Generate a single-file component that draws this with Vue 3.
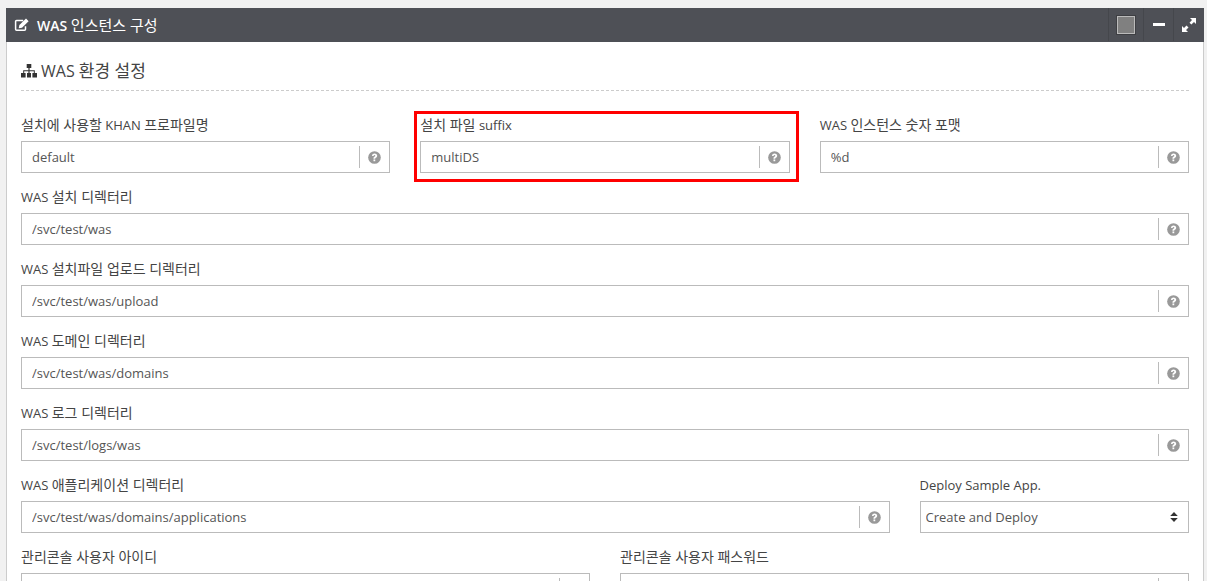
<script setup>
const split = (text) =>
  text.split(/([가-힣]+(?: [가-힣]+)*)/).filter(Boolean).map((t) => ({ t, ko: /[가-힣]/.test(t) }))

const rows = [
  [
    { label: '설치에 사용할 KHAN 프로파일명', value: 'default', span: 4 },
    { label: '설치 파일 suffix', value: 'multiDS', span: 4, mark: true },
    { label: 'WAS 인스턴스 숫자 포맷', value: '%d', span: 4 },
  ],
  [{ label: 'WAS 설치 디렉터리', value: '/svc/test/was', span: 12 }],
  [{ label: 'WAS 설치파일 업로드 디렉터리', value: '/svc/test/was/upload', span: 12 }],
  [{ label: 'WAS 도메인 디렉터리', value: '/svc/test/was/domains', span: 12 }],
  [{ label: 'WAS 로그 디렉터리', value: '/svc/test/logs/was', span: 12 }],
  [
    { label: 'WAS 애플리케이션 디렉터리', value: '/svc/test/was/domains/applications', span: 9 },
    { label: 'Deploy Sample App.', value: 'Create and Deploy', span: 3, select: true },
  ],
  [
    { label: '관리콘솔 사용자 아이디', value: '', span: 6 },
    { label: '관리콘솔 사용자 패스워드', value: '', span: 6 },
  ],
]
const fields = rows.flat()
const title = split('WAS 인스턴스 구성')
const section = split('WAS 환경 설정')
</script>

<template>
  <div class="page">
    <section class="panel">
      <header class="head">
        <svg class="edit" viewBox="0 0 16 14" width="16" height="14">
          <path d="M11.5 8.2v3a1 1 0 0 1-1 1H2.6a1 1 0 0 1-1-1V3.4a1 1 0 0 1 1-1h6.6" fill="none" stroke="#fff" stroke-width="1.5"/>
          <path d="M5.4 7 12 .6l2.6 2.6L8 9.7l-3.3.6z" fill="#fff"/>
        </svg>
        <h2 class="title"><span v-for="(r, i) in title" :key="i" :class="{ ko: r.ko }">{{ r.t }}</span></h2>
        <div class="tools">
          <div class="tool color"><span class="swatch"></span></div>
          <div class="tool min"><span class="dash"></span></div>
          <div class="tool full">
            <svg viewBox="0 0 14 14" width="14" height="14">
              <path d="M8 0h6v6l-2-2-2.6 2.6-1.9-1.9L10 2.1zM0 8l2 2 2.5-2.6 2 2L4 12l2 2H0z" fill="#fff"/>
            </svg>
          </div>
        </div>
      </header>
      <div class="body">
        <h3 class="section">
          <svg viewBox="0 0 16 14" width="16" height="14">
            <path d="M5.7 0h4.6v4H8.6v2.2h5.2V9H16v4.4h-4.6V9h1.4V7.2H8.6V9H10v4.4H6V9h1.4V7.2H3.2V9h1.4v4.4H0V9h2.2V6.2h5.2V4H5.7z" fill="#333"/>
          </svg>
          <span><span v-for="(r, i) in section" :key="i" :class="{ ko: r.ko }">{{ r.t }}</span></span>
        </h3>
        <form class="grid">
          <div v-for="f in fields" :key="f.label" class="field" :class="['s' + f.span, { mark: f.mark }]">
            <label class="lab"><span v-for="(r, i) in split(f.label)" :key="i" :class="{ ko: r.ko }">{{ r.t }}</span></label>
            <div class="control">
              <input class="inp" :value="f.value" readonly />
              <template v-if="f.select">
                <svg class="sort" viewBox="0 0 8 10" width="8" height="10">
                  <path d="M4 0l3.8 4H.2zM4 10L.2 6h7.6z" fill="#333"/>
                </svg>
              </template>
              <template v-else>
                <span class="sep"></span>
                <svg class="help" viewBox="0 0 14 14" width="13" height="13">
                  <circle cx="7" cy="7" r="6.8" fill="#999"/>
                  <path d="M4.3 5.3C4.5 3.6 5.7 2.8 7.1 2.8c1.6 0 2.8 1 2.8 2.4 0 1.1-.7 1.7-1.4 2.1-.6.3-.7.6-.7 1.1H5.9c0-1.2.2-1.7 1-2.2.6-.4 1-.6 1-1.1s-.4-.8-.9-.8-.9.3-1 1z" fill="#fff"/>
                  <rect x="5.9" y="9.1" width="1.9" height="1.9" fill="#fff"/>
                </svg>
              </template>
            </div>
          </div>
        </form>
      </div>
    </section>
  </div>
</template>

<style scoped>
.page {
  height: 581px;
  overflow: hidden;
  box-sizing: border-box;
  padding: 8px 3px 0 6px;
  background: #f1f1f1;
  font-family: "Open Sans", "Noto Sans CJK KR", sans-serif;
  color: #444;
}
.panel {
  height: 700px;
  background: #fff;
  border-right: 1px solid #ccc;
  border-left: 1px solid #ccc;
}
.head {
  height: 34px;
  margin: 0 -1px;
  background: #4e5056;
  color: #fff;
  display: flex;
  align-items: center;
  padding-left: 8px;
}
.edit { flex: none; margin-right: 7px; }
.title {
  margin: 0;
  flex: 1;
  font-size: 14px;
  font-weight: 600;
  line-height: 34px;
}
.title .ko { font-size: 15px; font-weight: 400; }
.tools { display: flex; height: 33px; align-self: flex-start; }
.tool {
  display: flex;
  align-items: center;
  justify-content: center;
  border-left: 1px solid #45474c;
  box-sizing: border-box;
}
.color { width: 35px; }
.min { width: 30px; }
.full { width: 31px; }
.swatch {
  width: 16px;
  height: 16px;
  background: #808080;
  border: 1px solid #bbb;
  outline: 1px solid #3e3f43;
}
.dash { width: 12px; height: 3px; background: #fff; margin-top: 0; }
.body { padding: 0 14px; }
.section {
  margin: 0;
  height: 49px;
  box-sizing: border-box;
  padding-top: 17px;
  display: flex;
  align-items: flex-start;
  gap: 4px;
  font-size: 16px;
  font-weight: 400;
  line-height: 24px;
  color: #444;
  border-bottom: 1px dashed #ccc;
}
.section .ko { font-size: 17px; }
.section svg { margin-top: 5px; }
.grid {
  display: grid;
  grid-template-columns: repeat(12, 1fr);
  column-gap: 30px;
  row-gap: 15px;
  padding-top: 25px;
}
.field { position: relative; }
.s3 { grid-column: span 3; }
.s4 { grid-column: span 4; }
.s6 { grid-column: span 6; }
.s9 { grid-column: span 9; }
.s12 { grid-column: span 12; }
.mark::after {
  content: "";
  position: absolute;
  left: -6px;
  right: -9px;
  top: -5px;
  bottom: -9px;
  border: 3px solid #f00;
  pointer-events: none;
}
.lab {
  display: block;
  height: 20px;
  margin-bottom: 5px;
  font-size: 13px;
  line-height: 18px;
  color: #444;
}
.lab .ko { font-size: 14px; }
.control { position: relative; height: 32px; }
.inp {
  display: block;
  width: 100%;
  height: 32px;
  box-sizing: border-box;
  border: 1px solid #bbb;
  border-radius: 0;
  outline: 0;
  padding: 0 30px 0 10px;
  font: 13px "Open Sans", "Noto Sans CJK KR", sans-serif;
  color: #555;
  background: #fff;
}
.sep {
  position: absolute;
  right: 30px;
  top: 5px;
  height: 22px;
  width: 1px;
  background: #bbb;
}
.help { position: absolute; right: 9px; top: 9.5px; }
.sort { position: absolute; right: 11px; top: 11px; }
.s3 .inp { padding-left: 5px; }
</style>
